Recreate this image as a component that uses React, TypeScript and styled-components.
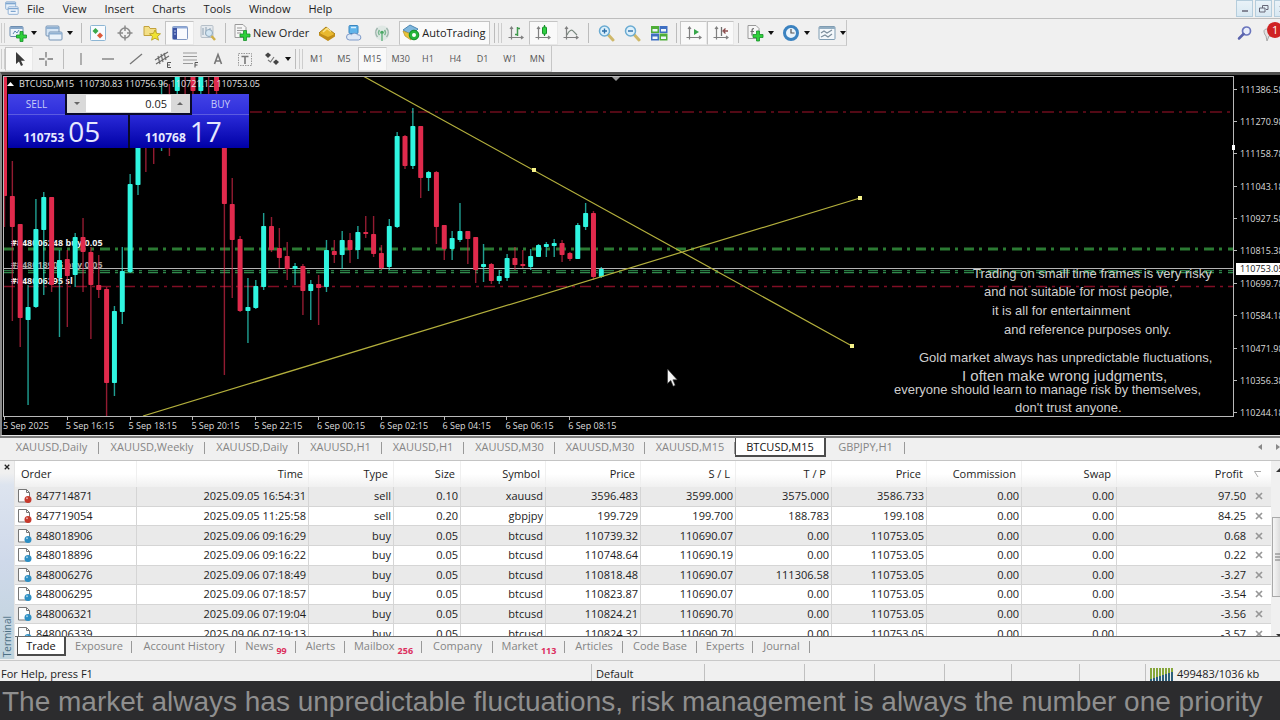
import React from 'react';
import styled, { createGlobalStyle, css } from 'styled-components';

const GlobalStyle = createGlobalStyle`
  *, *::before, *::after { box-sizing: border-box; }
  html, body { margin: 0; padding: 0; }
  body { overflow-x: hidden; background: #f0f0f0; }
  body, button, input { font-family: "Open Sans", "Noto Sans", sans-serif; font-size: 11px; }
  button { border: 0; padding: 0; margin: 0; background: none; color: inherit; }
  svg { display: block; flex: none; }
`;

/* ---------- shell ---------- */

const Window = styled.div`
  display: flex;
  flex-direction: column;
  min-height: 100vh;
  overflow: hidden;
  background: #f0f0f0;
  color: #2b2b2b;
`;

const MenuBar = styled.nav`
  display: flex;
  align-items: flex-start;
  height: 19px;
  border-bottom: 1px solid #bdbdbd;
`;

const MenuIcon = styled.span`
  width: 25px;
  padding: 1px 0 0 4px;
`;

const MenuButton = styled.button`
  height: 16px;
  padding: 0 9px;
  line-height: 15px;
  color: #222;
  white-space: nowrap;
  &:first-of-type { padding-left: 2px; }
`;

const WindowControls = styled.div`
  display: flex;
  gap: 2px;
  width: 44px;
  margin-left: auto;
  overflow: hidden;
`;

const WindowButton = styled.button`
  display: flex;
  flex: none;
  align-items: center;
  justify-content: center;
  width: 17px;
  height: 17px;
  border: 1px solid #b5cddc;
  background: linear-gradient(#e9f2f8, #d8e8f2);
`;

const Toolbar = styled.div<{ $last?: boolean }>`
  display: flex;
  align-items: center;
  height: ${(p) => (p.$last ? 26 : 27)}px;
  ${(p) => !p.$last && css`padding-top: 1px;`}
`;

const Strip = styled.div`
  display: flex;
  align-items: center;
  height: 26px;
  padding-left: 1px;
  border-right: 1px solid #c6c6c6;
  border-bottom: 1px solid #d2d2d2;
`;

const Grip = styled.span`
  flex: none;
  width: 4px;
  height: 20px;
  border: 1px solid #cdcdcd;
  border-width: 0 1px;
`;

const Sep = styled.span`
  flex: none;
  width: 8px;
  height: 20px;
  background: linear-gradient(#bcbcbc, #bcbcbc) 4px 0 / 1px 100% no-repeat;
`;

const Group = styled.div<{ $width: number }>`
  display: flex;
  flex: none;
  align-items: center;
  width: ${(p) => p.$width}px;
  height: 24px;
`;

const ToolButton = styled.button<{ $pressed?: boolean }>`
  display: flex;
  flex: 1 0 0;
  align-items: center;
  justify-content: center;
  height: 24px;
  font-size: 9px;
  color: #555;
  ${(p) =>
    p.$pressed &&
    css`
      background: #f9f9f9;
      border: 1px solid #c4c4c4;
      border-right-color: #e8e8e8;
      border-bottom-color: #e8e8e8;
    `}
`;

const DropButton = styled.button<{ $narrow?: boolean }>`
  display: flex;
  flex: none;
  align-items: center;
  gap: 4px;
  width: ${(p) => (p.$narrow ? 32 : 36)}px;
  height: 24px;
  padding-left: 4px;
`;

const LabelButton = styled.button<{ $pressed?: boolean }>`
  display: flex;
  flex: none;
  align-items: center;
  gap: 2px;
  height: 24px;
  padding: 0 4px 1px;
  color: #222;
  white-space: nowrap;
  ${(p) =>
    p.$pressed &&
    css`
      margin-left: 4px;
      padding: 0 4px 1px 2px;
      background: #fafafa;
      border: 1px solid #c4c4c4;
      border-bottom-color: #ddd;
    `}
`;

const ToolbarEnd = styled.div`
  display: flex;
  align-items: center;
  gap: 7px;
  width: 44px;
  margin-left: auto;
  overflow: hidden;
`;

/* ---------- chart ---------- */

const ChartFrame = styled.main`
  display: grid;
  flex: none;
  grid-template-columns: 1fr 46px;
  grid-template-rows: 342px 18px;
  border-top: 3px solid #50504f;
  border-bottom: 1px solid #e6e6e6;
  border-left: 2px solid #8a8a8a;
  background: #000;
  overflow: hidden;
`;

const Plot = styled.section`
  position: relative;
  margin: 1px 0 0 1px;
  border: 1px solid #b9b9b9;
  overflow: hidden;
`;

const PlotSvg = styled.svg`
  position: absolute;
  inset: 0;
  width: 100%;
  height: 100%;
`;

const PlotTitle = styled.div`
  position: absolute;
  top: 0;
  left: 3px;
  display: flex;
  align-items: center;
  gap: 5px;
  height: 13px;
  font-size: 9px;
  color: #e2e2e2;
  white-space: pre;
`;

const OrderTag = styled.span<{ $y: number; $dim?: boolean }>`
  position: absolute;
  top: ${(p) => p.$y}px;
  left: 7px;
  font-size: 9px;
  font-weight: 700;
  line-height: 12px;
  color: ${(p) => (p.$dim ? '#a8a8a8' : '#f0f0f0')};
  white-space: nowrap;
`;

const Note = styled.p<{ $y: number; $from: number; $large?: boolean }>`
  position: absolute;
  top: ${(p) => p.$y}px;
  left: calc(100% - ${(p) => p.$from}px);
  margin: 0;
  font-family: "Liberation Sans", Arial, sans-serif;
  font-size: ${(p) => (p.$large ? 15 : 13)}px;
  line-height: 18px;
  color: #cfcfcf;
  white-space: nowrap;
`;

const TradePanel = styled.div`
  position: absolute;
  top: 17px;
  left: 4px;
  display: grid;
  grid-template-columns: 57px minmax(0, 1fr) 57px;
  grid-template-rows: 21px 33px;
  width: 241px;
  background: #0a0a2a;
`;

const SideButton = styled.button`
  color: #c9cdf8;
  font-size: 10px;
  background: linear-gradient(#4242e6, #2f2fdc);
  border-bottom: 1px solid #5b5be0;
`;

const VolumeBox = styled.div`
  display: flex;
  height: 19px;
  margin: 0 2px;
  border: 1px solid #d8d8d8;
  background: #fff;
`;

const VolumeStep = styled.button`
  display: flex;
  flex: none;
  align-items: center;
  justify-content: center;
  width: 18px;
  background: #d9d9d9;
`;

const VolumeInput = styled.input`
  flex: 1;
  min-width: 0;
  border: 0;
  padding: 0 4px;
  text-align: right;
  color: #222;
  background: #fff;
`;

const Quotes = styled.div`
  display: grid;
  grid-column: 1 / -1;
  grid-template-columns: 1fr 1fr;
  gap: 2px;
  min-height: 0;
`;

const Quote = styled.div`
  display: flex;
  align-items: baseline;
  justify-content: center;
  gap: 4px;
  height: 33px;
  padding-right: 12px;
  font-size: 12px;
  font-weight: 700;
  line-height: 32px;
  color: #e6e8ff;
  background: linear-gradient(#2a2ad8, #0000a6);
  overflow: hidden;
`;

const QuoteBig = styled.span`
  font-size: 28px;
  font-weight: 400;
  line-height: 32px;
`;

const PriceAxis = styled.div`
  position: relative;
  display: grid;
  grid-auto-rows: 1fr;
  height: 356px;
  margin-top: -2px;
  font-size: 9px;
  color: #dcdcdc;
`;

const PriceLabel = styled.span`
  display: flex;
  align-items: center;
  gap: 3px;
  &::before {
    content: "";
    width: 3px;
    height: 1px;
    background: #b9b9b9;
  }
`;

const CurrentPrice = styled.span`
  position: absolute;
  top: 190px;
  left: 2px;
  width: 46px;
  padding-left: 4px;
  line-height: 12px;
  color: #111;
  background: #fff;
`;

const AxisHandle = styled.span`
  position: absolute;
  top: 72px;
  left: -2px;
  width: 3px;
  height: 5px;
  background: #fff;
`;

const TimeAxis = styled.div`
  display: grid;
  grid-template-columns: repeat(10, 1fr);
  width: 628px;
  font-size: 9px;
  color: #dcdcdc;
`;

const TimeLabel = styled.span`
  position: relative;
  padding-left: 1px;
  line-height: 17px;
  white-space: nowrap;
  &::before {
    content: "";
    position: absolute;
    top: 0;
    left: 2px;
    width: 1px;
    height: 3px;
    background: #b9b9b9;
  }
`;

/* ---------- tabs ---------- */

const ChartTabs = styled.div`
  display: flex;
  flex: none;
  height: 25px;
  padding-left: 4px;
  border-top: 2px solid #7b7b7b;
  border-bottom: 1px solid #c4c4c4;
`;

const BottomTabs = styled.div`
  display: flex;
  flex: none;
  height: 22px;
  padding-left: 2px;
  border-top: 1px solid #6b6b6b;
`;

const Tab = styled.button<{ $active?: boolean; $width: number }>`
  position: relative;
  flex: none;
  width: ${(p) => p.$width}px;
  height: 19px;
  padding: 0 0 2px;
  color: #858585;
  text-align: center;
  white-space: nowrap;
  &::after {
    content: "";
    position: absolute;
    top: 4px;
    right: 0;
    width: 1px;
    height: 12px;
    background: #999;
  }
  ${(p) =>
    p.$active &&
    css`
      padding-bottom: 0;
      color: #111;
      background: #fff;
      border: solid #4b4b4b;
      border-width: 0 2px 2px 1px;
      &::after { display: none; }
    `}
`;

const Count = styled.sub`
  margin-left: 3px;
  font-size: 9px;
  font-weight: 700;
  line-height: 0;
  color: #dc2f5e;
  vertical-align: -4px;
`;

const TabScroll = styled.div`
  display: flex;
  gap: 14px;
  width: 24px;
  padding: 6px 0 0 2px;
  margin-left: auto;
  overflow: hidden;
`;

/* ---------- terminal ---------- */

const Terminal = styled.section`
  display: grid;
  flex: none;
  grid-template-columns: 15px 1fr;
  height: 198px;
`;

const SideBar = styled.aside`
  display: flex;
  flex-direction: column;
  align-items: center;
  justify-content: space-between;
  background: linear-gradient(#f0f0f0 12px, #dde4ef 24px, #cfd9ea 100px, #bfd3dc);
  border-right: 1px solid #e4e4e4;
`;

const SideTitle = styled.span`
  writing-mode: vertical-rl;
  transform: rotate(180deg);
  padding-top: 2px;
  font-size: 10px;
  line-height: 13px;
  color: #4c7084;
`;

const CloseButton = styled.button`
  display: flex;
  align-items: center;
  justify-content: center;
  width: 12px;
  height: 12px;
`;

const TerminalBody = styled.div`
  display: flex;
  flex-direction: column;
  min-width: 0;
`;

const TableArea = styled.div`
  display: grid;
  grid-template-columns: 1fr 9px;
  height: 175px;
  overflow: hidden;
`;

const OrderTable = styled.table`
  width: 100%;
  height: 183px;
  table-layout: fixed;
  border-spacing: 0;
  background: #fff;
  color: #1c1c1c;
`;

const HeadCell = styled.th<{ $left?: boolean }>`
  height: 26px;
  padding: 0 5px 0 6px;
  border-right: 1px solid #efefef;
  font-weight: 400;
  line-height: 14px;
  text-align: ${(p) => (p.$left ? 'left' : 'right')};
  white-space: nowrap;
  background: linear-gradient(#fff 50%, #f0f0f0);
  &:nth-last-child(-n + 2) { border-right: 0; }
`;

const Row = styled.tr`
  &:nth-child(odd) { background: #eaeaea; }
`;

const Cell = styled.td<{ $left?: boolean }>`
  padding: 0 2px 0 3px;
  border-right: 1px solid #d5d5d5;
  border-bottom: 1px solid #d5d5d5;
  line-height: 14px;
  text-align: ${(p) => (p.$left ? 'left' : 'right')};
  white-space: nowrap;
  overflow: hidden;
  &:nth-last-child(-n + 2) { border-right: 0; }
`;

const OrderId = styled.span`
  display: flex;
  align-items: center;
  gap: 4px;
  height: 14px;
`;

const RowClose = styled.button`
  display: flex;
  align-items: center;
  justify-content: center;
  width: 16px;
  height: 14px;
`;

const ScrollTrack = styled.div`
  display: flex;
  flex-direction: column;
  align-items: flex-end;
  justify-content: space-between;
  overflow: hidden;
  background: #f0f0f0;
`;

const ScrollThumb = styled.div`
  display: flex;
  align-items: center;
  justify-content: flex-end;
  width: 8px;
  height: 80px;
  margin-top: 6px;
  border: 1px solid #a9a9a9;
  border-right: 0;
  background: linear-gradient(90deg, #f6f6f6, #dcdcdc);
`;

const StatusBar = styled.footer`
  display: grid;
  flex: none;
  grid-template-columns: 1fr 113px 100px 70px 70px 67px 68px 66px 135px;
  height: 21px;
  margin-top: 1px;
  padding-top: 3px;
  border-top: 1px solid #c9c9c9;
`;

const StatusCell = styled.span`
  display: flex;
  align-items: center;
  gap: 4px;
  padding: 3px 0 0 4px;
  border-left: 1px solid #c0c0c0;
  line-height: 14px;
  color: #222;
  white-space: nowrap;
  &:first-child { border-left: 0; padding-left: 1px; }
`;

const Banner = styled.div`
  flex: 1 0 38px;
  padding-left: 2px;
  font-family: "Liberation Sans", Arial, sans-serif;
  font-size: 28px;
  line-height: 42px;
  color: #8f8f8f;
  background: #2c2c2e;
  white-space: nowrap;
  overflow: hidden;
`;

/* ---------- icons ---------- */

const Icon = ({ children, size = 18 }: { children: React.ReactNode; size?: number }) => (
  <svg width={size} height={size} viewBox="0 0 18 18" fill="none" aria-hidden="true">
    {children}
  </svg>
);

const Caret = () => (
  <svg width="6" height="4" viewBox="0 0 6 4" aria-hidden="true">
    <path d="M0 0h6L3 4z" fill="#111" />
  </svg>
);

const Plus = ({ x = 12, y = 12 }: { x?: number; y?: number }) => (
  <path
    d={`M${x - 1.5} ${y - 5}h3v3.500h3.500v3h-3.500v3.500h-3v-3.500h-3.500v-3h3.500z`}
    fill="#2fd03a"
    stroke="#15902a"
    strokeWidth=".8"
  />
);

const AppIcon = () => (
  <Icon size={15}>
    <rect x="2" y="1" width="12" height="9" rx="1" fill="#e6f0fa" stroke="#7fa6cf" />
    <path d="M2 3h12" stroke="#7fa6cf" strokeWidth="2" />
    <rect x="5" y="7" width="12" height="9" rx="1" fill="#f1f6fc" stroke="#7fa6cf" />
    <path d="M5 9h12M8 12.500h6" stroke="#7fa6cf" strokeWidth="1.500" />
  </Icon>
);

const NewChartIcon = () => (
  <Icon>
    <rect x="1" y="2.500" width="13" height="10" rx="1" fill="#eef4fb" stroke="#6d8db0" />
    <path d="M1 4h13" stroke="#86a6c8" strokeWidth="2" />
    <path d="M4 10l2-3 2 2 2-3" stroke="#5d86b0" />
    <Plus x={12.500} y={12.500} />
  </Icon>
);

const ProfilesIcon = () => (
  <Icon>
    <rect x="1" y="2" width="13" height="10" rx="1" fill="#d5e5f5" stroke="#7593b5" />
    <path d="M1 4h13" stroke="#8fb0d2" strokeWidth="2" />
    <rect x="4" y="8" width="13" height="8" rx="1" fill="#eaf2fa" stroke="#7593b5" />
    <path d="M4 9.500h13" stroke="#8fb0d2" strokeWidth="2" />
  </Icon>
);

const MarketWatchIcon = () => (
  <Icon>
    <rect x="1.500" y="1.500" width="15" height="15" rx="1" fill="#f8fbfe" stroke="#8db6d4" />
    <path d="M6.500 4l3 3-3 3-3-3z" fill="#3aa84a" />
    <path d="M11 8.500l3 3-3 3-3-3z" fill="#dc5a3a" />
  </Icon>
);

const DataWindowIcon = () => (
  <Icon>
    <circle cx="9" cy="9" r="5" stroke="#8a8a8a" strokeWidth="1.500" />
    <path d="M9 1.500v5.500M9 11v5.500M1.500 9H7M11 9h5.500" stroke="#8a8a8a" strokeWidth="1.500" />
  </Icon>
);

const NavigatorIcon = () => (
  <Icon>
    <path d="M1 2.500h5l1 2h6v7H1z" fill="#f3df86" stroke="#c3a23c" />
    <path d="M12 6l1.600 3.400 3.900.4-2.900 2.600.9 3.800-3.500-2-3.400 2 .8-3.800L6.500 9.800l3.900-.4z" fill="#f0e232" stroke="#b39a1d" strokeWidth=".8" />
  </Icon>
);

const TerminalIcon = () => (
  <Icon>
    <rect x="1.500" y="2.500" width="15" height="13" rx="1" fill="#f8fafe" stroke="#7f97c2" />
    <path d="M2 3.500h14" stroke="#8fa8d6" strokeWidth="2" />
    <rect x="2" y="4" width="4" height="11" fill="#3d55a4" />
    <path d="M3 7h2M3 10h2" stroke="#b9c9ec" />
  </Icon>
);

const TesterIcon = () => (
  <Icon>
    <rect x="2" y="1.500" width="12" height="12" rx="1" fill="#e4e9ee" stroke="#b6bfc8" />
    <path d="M4 4v7M7 3v8M11 4v4" stroke="#8ea0b0" />
    <circle cx="10" cy="9" r="3.500" fill="#d3e6f3" stroke="#8fa8bc" />
    <path d="M12.500 12l3.500 4" stroke="#d1b04a" strokeWidth="2.500" />
  </Icon>
);

const NewOrderIcon = () => (
  <Icon>
    <path d="M2 1.500h8l3 3v10H2z" fill="#f6f6f6" stroke="#9a9a9a" />
    <path d="M4 5h5M4 7.500h6M4 10h4" stroke="#979797" />
    <Plus x={12} y={12.500} />
  </Icon>
);

const MetaEditorIcon = () => (
  <Icon>
    <path d="M1 9l7-6 9 7-7 6z" fill="#e8b92f" stroke="#a77c12" />
    <path d="M1 9l9 4 7-3v2.500L10 17l-9-5.500z" fill="#c28e18" />
    <path d="M5 8l4-3.500 4 3" stroke="#f9e28c" strokeWidth="1.500" />
  </Icon>
);

const CloudIcon = () => (
  <Icon>
    <rect x="4" y="1.500" width="9" height="8" rx="1" fill="#5fb4ea" stroke="#3a86c0" />
    <path d="M6 3.500h5" stroke="#d8effc" strokeWidth="1.500" />
    <path d="M4.500 16a3 3 0 010-6c1 0 1.500.4 1.900.9a3.600 3.600 0 016.200 0A2.600 2.600 0 1113.500 16z" fill="#dfe9f6" stroke="#7f9bc9" />
  </Icon>
);

const SignalIcon = () => (
  <Icon>
    <circle cx="9" cy="9" r="7.500" fill="#dfe8e4" />
    <path d="M4.500 4a7 7 0 000 9M13.500 4a7 7 0 010 9" stroke="#9db3ab" strokeWidth="1.500" />
    <path d="M6.500 6a4 4 0 000 5M11.500 6a4 4 0 010 5" stroke="#7cb892" strokeWidth="1.500" />
    <circle cx="9" cy="8.500" r="1.800" fill="#4aa864" />
    <path d="M9 9v8" stroke="#6ab585" strokeWidth="1.500" />
  </Icon>
);

const AutoTradingIcon = () => (
  <Icon>
    <path d="M1 7l7-5 8 4-6 6z" fill="#7fb7dd" stroke="#4d88b3" />
    <path d="M1 8l8 3v6L3 13z" fill="#e9c43a" stroke="#b4912a" strokeWidth=".7" />
    <circle cx="12" cy="12" r="4.800" fill="#27b53a" stroke="#138a25" />
    <circle cx="12" cy="12" r="2" fill="#fff" />
  </Icon>
);

const AxisGlyph = () => (
  <path d="M4.500 3v12.500M1.500 13.500h14.500M3 5l1.500-2L6 5M14 12l2 1.500-2 1.500" stroke="#808080" strokeWidth="1.200" />
);

const BarChartIcon = () => (
  <Icon>
    <AxisGlyph />
    <path d="M10.500 3v9M8 10.500h2.500M10.500 4.500H13" stroke="#3f9a4c" strokeWidth="1.500" />
  </Icon>
);

const CandleChartIcon = () => (
  <Icon>
    <AxisGlyph />
    <path d="M10.500 1v11" stroke="#1a8f2c" strokeWidth="1.200" />
    <rect x="8.500" y="3" width="4" height="7" rx="1" fill="#2fd042" stroke="#1a8f2c" />
  </Icon>
);

const LineChartIcon = () => (
  <Icon>
    <AxisGlyph />
    <path d="M5 11c2-5 5-6 6.500-3.500L15 11" stroke="#7b8a80" strokeWidth="1.200" />
  </Icon>
);

const ZoomIcon = ({ plus }: { plus?: boolean }) => (
  <Icon>
    <path d="M11 10.500l5 5.500" stroke="#cfb86a" strokeWidth="3" strokeLinecap="round" />
    <circle cx="7.500" cy="7" r="5" fill="#ddf0fb" stroke="#6aabd2" strokeWidth="1.500" />
    <path d={plus ? 'M5 7h5M7.500 4.500v5' : 'M5 7h5'} stroke="#2a6ea8" strokeWidth="1.400" />
  </Icon>
);

const TileIcon = () => (
  <Icon>
    <rect x="1" y="2" width="8" height="7" fill="#4fae38" />
    <rect x="9.500" y="2" width="8" height="7" fill="#3f6fc2" />
    <rect x="1" y="9.500" width="8" height="7" fill="#3f6fc2" />
    <rect x="9.500" y="9.500" width="8" height="7" fill="#4fae38" />
    <path d="M2.500 5h5v2.500h-5zM11 5h5v2.500h-5zM2.500 12.500h5V15h-5zM11 12.500h5V15h-5z" fill="#eef6fb" />
  </Icon>
);

const AutoScrollIcon = () => (
  <Icon>
    <AxisGlyph />
    <path d="M9 5l5 3-5 3z" fill="#37a64a" />
  </Icon>
);

const ShiftIcon = () => (
  <Icon>
    <AxisGlyph />
    <path d="M9.500 3v9" stroke="#707070" strokeWidth="1.300" />
    <path d="M16 7h-4M13.500 4.500L11 7l2.500 2.500" stroke="#8b4a4a" strokeWidth="1.300" />
  </Icon>
);

const IndicatorsIcon = () => (
  <Icon>
    <path d="M2 1.500h8l3 3v10H2z" fill="#f6f6f6" stroke="#9a9a9a" />
    <path d="M8 4.500c-2 0-2 1-2 3v4M4.500 7.500H8" stroke="#707070" strokeWidth="1.200" />
    <Plus x={12} y={12} />
  </Icon>
);

const ClockIcon = () => (
  <Icon>
    <circle cx="9" cy="9" r="6.500" fill="#e8f3fc" stroke="#3b82c0" strokeWidth="3" />
    <path d="M9 5v4h3.500" stroke="#555" strokeWidth="1.200" />
  </Icon>
);

const TemplateIcon = () => (
  <Icon>
    <rect x="1" y="2.500" width="16" height="13" rx="1" fill="#f4f8fb" stroke="#7f9cb2" />
    <path d="M1 4h16" stroke="#93aec2" strokeWidth="2" />
    <path d="M3 9l3-2 3 2 5-3M3 13l4-2 3 2 4-3" stroke="#7c8e9c" strokeWidth="1.200" />
  </Icon>
);

const PointerIcon = () => (
  <Icon>
    <path d="M6 2v12l3-2.500 2 4.500 2-1-2-4.200h4z" fill="#3b3b3b" />
  </Icon>
);

const CrosshairIcon = () => (
  <Icon>
    <path d="M9 2v5.500M9 10.500V16M2 9h5.500M10.500 9H16" stroke="#777" strokeWidth="1.300" />
  </Icon>
);

const VLineIcon = () => <Icon><path d="M9 3v12" stroke="#8b8b8b" strokeWidth="1.300" /></Icon>;
const HLineIcon = () => <Icon><path d="M3 9h12" stroke="#777" strokeWidth="1.300" /></Icon>;
const TrendIcon = () => <Icon><path d="M3 14L15 4" stroke="#777" strokeWidth="1.300" /></Icon>;

const ChannelIcon = () => (
  <Icon>
    <path d="M1 10L14 2M2 14l13-8M4 6l2 8M7 4l2 8M10 3l2 7" stroke="#6b6b6b" strokeWidth="1.200" />
    <path d="M17 12.500h-3.500v5H17M13.500 15H16" stroke="#555" />
  </Icon>
);

const FiboIcon = () => (
  <Icon>
    <path d="M2 3h14M2 6.500h14M2 10h14M2 13.500h10" stroke="#999" strokeWidth="1.200" />
    <path d="M17 12.500h-3v5M14 15h2.500" stroke="#555" />
  </Icon>
);

const LetterIcon = () => (
  <Icon><path d="M5.500 14L9 4.500l3.500 9.500M6.800 11h4.400" stroke="#777" strokeWidth="1.600" /></Icon>
);

const TextLabelIcon = () => (
  <Icon>
    <rect x="2.500" y="3.500" width="13" height="12" stroke="#999" strokeDasharray="1.500 1" />
    <path d="M5.500 6.500h7M9 6.500V14" stroke="#777" strokeWidth="1.600" />
  </Icon>
);

const ArrowsIcon = () => (
  <Icon>
    <path d="M2 5l3-2.500L8 5 5 8z" fill="#444" />
    <path d="M10 12l3-2.500 3 2.500-3 3z" fill="#444" />
    <path d="M5 10l2.500 2L11 7" stroke="#777" strokeWidth="1.200" />
  </Icon>
);

const SearchIcon = () => (
  <Icon>
    <circle cx="10.500" cy="7" r="4" fill="#e9eefb" stroke="#6a75bd" strokeWidth="1.700" />
    <path d="M7.500 10L3 14.500" stroke="#5a63ad" strokeWidth="2.500" strokeLinecap="round" />
  </Icon>
);

const AlertIcon = () => (
  <svg width="24" height="22" viewBox="0 0 24 22" aria-hidden="true">
    <path d="M3 9c0-3 9-3 9 1s-3 4-4 4l-2 5-1-5c-1-1-2-3-2-5z" fill="#e2e2e2" stroke="#a8a8a8" />
    <circle cx="14" cy="8" r="8" fill="#cf2323" />
    <text x="11" y="12" fontSize="11" fill="#fff">1</text>
  </svg>
);

const DocIcon = ({ color }: { color: string }) => (
  <svg width="14" height="14" viewBox="0 0 14 14" fill="none" aria-hidden="true">
    <path d="M.500.500h8l3 3v9.500h-11z" fill="#fdfdfd" stroke="#767676" />
    <path d="M8.500.500v3h3" stroke="#767676" />
    <circle cx="10" cy="10.500" r="3.500" fill={color} />
    <circle cx="9" cy="9.300" r="1" fill="#fff" opacity=".55" />
  </svg>
);

const CrossIcon = ({ color, size = 8 }: { color: string; size?: number }) => (
  <svg width={size} height={size} viewBox="0 0 8 8" aria-hidden="true">
    <path d="M1 1l6 6M7 1L1 7" stroke={color} strokeWidth="1.700" />
  </svg>
);

const TrafficIcon = () => (
  <svg width="23" height="13" viewBox="0 0 23 13" aria-hidden="true">
    {Array.from({ length: 8 }, (_, i) => (
      <g key={i}>
        <rect x={i * 3} y="0" width="2" height={11 - i} fill="#86a63a" />
        <rect x={i * 3} y={11 - i} width="2" height={2 + i} fill="#2c5f7c" />
      </g>
    ))}
  </svg>
);

/* ---------- data ---------- */

type Dir = 'u' | 'd';
// direction, high, body top, body bottom, low
const CANDLES: [Dir, number, number, number, number][] = [
  ['d', 77, 77, 196, 227], ['d', 161, 196, 227, 321], ['d', 224, 224, 318, 347], ['u', 285, 307, 320, 405],
  ['u', 199, 229, 307, 308], ['u', 192, 197, 230, 295], ['d', 197, 197, 285, 292], ['u', 250, 260, 278, 337],
  ['d', 250, 259, 276, 327], ['u', 233, 237, 275, 287], ['d', 218, 237, 252, 292], ['d', 247, 252, 285, 339],
  ['d', 255, 285, 290, 298], ['d', 287, 289, 383, 416], ['u', 306, 311, 383, 396], ['u', 247, 271, 312, 324],
  ['u', 174, 184, 272, 273], ['u', 110, 118, 185, 195], ['d', 104, 108, 130, 172], ['d', 100, 110, 135, 164],
  ['u', 80, 100, 130, 151], ['d', 84, 100, 120, 156], ['u', 70, 70, 91, 100], ['d', 76, 95, 120, 130],
  ['d', 70, 70, 91, 100], ['u', 70, 70, 91, 100], ['d', 76, 95, 120, 130], ['d', 70, 70, 91, 130],
  ['d', 100, 110, 204, 375], ['d', 178, 204, 240, 298], ['d', 236, 239, 311, 312], ['u', 278, 307, 311, 343],
  ['u', 280, 286, 308, 309], ['u', 213, 226, 287, 290], ['d', 217, 226, 250, 252], ['d', 228, 248, 258, 268],
  ['d', 242, 256, 269, 280], ['u', 263, 266, 269, 285], ['d', 264, 266, 291, 315], ['u', 280, 284, 291, 320],
  ['d', 275, 284, 288, 325], ['u', 240, 250, 287, 292], ['d', 240, 251, 255, 263], ['u', 231, 240, 255, 269],
  ['d', 233, 240, 250, 263], ['u', 226, 232, 250, 259], ['d', 216, 232, 234, 238], ['d', 216, 234, 254, 257],
  ['d', 245, 253, 268, 270], ['u', 219, 226, 267, 270], ['u', 132, 136, 227, 228], ['d', 135, 136, 166, 169],
  ['u', 108, 126, 166, 169], ['d', 126, 126, 178, 198], ['u', 171, 172, 178, 191], ['d', 171, 172, 227, 244],
  ['d', 225, 225, 249, 260], ['u', 231, 238, 249, 260], ['u', 203, 231, 240, 242], ['d', 231, 231, 239, 264],
  ['d', 237, 237, 270, 283], ['u', 244, 264, 267, 282], ['d', 263, 264, 281, 284], ['u', 270, 276, 281, 284],
  ['u', 254, 258, 278, 281], ['d', 247, 258, 265, 270], ['d', 250, 264, 266, 268], ['u', 249, 256, 267, 270],
  ['u', 244, 245, 257, 257], ['u', 242, 244, 247, 257], ['u', 239, 243, 246, 257], ['d', 240, 243, 255, 262],
  ['d', 252, 253, 259, 261], ['u', 223, 225, 259, 259], ['u', 203, 213, 227, 230], ['d', 211, 213, 277, 280],
  ['u', 267, 269, 277, 278],
];

const PRICES = ['111386.58', '111270.98', '111158.78', '111043.18', '110927.58', '110815.38', '110699.78', '110584.18', '110471.98', '110356.38', '110244.18'];
const TIMES = ['5 Sep 2025', '5 Sep 16:15', '5 Sep 18:15', '5 Sep 20:15', '5 Sep 22:15', '6 Sep 00:15', '6 Sep 02:15', '6 Sep 04:15', '6 Sep 06:15', '6 Sep 08:15'];

const NOTES: { text: string; y: number; from: number; large?: boolean }[] = [
  { text: 'Trading on small time frames is very risky', y: 188, from: 260 },
  { text: 'and not suitable for most people,', y: 206, from: 249 },
  { text: 'it is all for entertainment', y: 225, from: 241 },
  { text: 'and reference purposes only.', y: 244, from: 229 },
  { text: 'Gold market always has unpredictable fluctuations,', y: 272, from: 314 },
  { text: 'I often make wrong judgments,', y: 290, from: 271, large: true },
  { text: 'everyone should learn to manage risk by themselves,', y: 304, from: 339 },
  { text: "don't trust anyone.", y: 322, from: 218 },
];

const CHART_TABS: [string, number][] = [
  ['XAUUSD,Daily', 95], ['XAUUSD,Weekly', 106], ['XAUUSD,Daily', 94], ['XAUUSD,H1', 83], ['XAUUSD,H1', 82],
  ['XAUUSD,M30', 91], ['XAUUSD,M30', 90], ['XAUUSD,M15', 90], ['BTCUSD,M15', 91], ['GBPJPY,H1', 79],
];

const BOTTOM_TABS: [string, number, string?][] = [
  ['Trade', 49], ['Exposure', 66], ['Account History', 104], ['News', 60, '99'], ['Alerts', 49], ['Mailbox', 77, '256'],
  ['Company', 71], ['Market', 72, '113'], ['Articles', 58], ['Code Base', 74], ['Experts', 56], ['Journal', 57],
];

const COLUMNS: [string, number | undefined][] = [
  ['Order', 122], ['Time', 172], ['Type', 85], ['Size', 67], ['Symbol', 85], ['Price', 95], ['S / L', 95],
  ['T / P', 96], ['Price', 95], ['Commission', 95], ['Swap', 95], ['Profit', undefined],
];

const ORDERS: string[][] = [
  ['847714871', '2025.09.05 16:54:31', 'sell', '0.10', 'xauusd', '3596.483', '3599.000', '3575.000', '3586.733', '0.00', '0.00', '97.50'],
  ['847719054', '2025.09.05 11:25:58', 'sell', '0.20', 'gbpjpy', '199.729', '199.700', '188.783', '199.108', '0.00', '0.00', '84.25'],
  ['848018906', '2025.09.06 09:16:29', 'buy', '0.05', 'btcusd', '110739.32', '110690.07', '0.00', '110753.05', '0.00', '0.00', '0.68'],
  ['848018896', '2025.09.06 09:16:22', 'buy', '0.05', 'btcusd', '110748.64', '110690.19', '0.00', '110753.05', '0.00', '0.00', '0.22'],
  ['848006276', '2025.09.06 07:18:49', 'buy', '0.05', 'btcusd', '110818.48', '110690.07', '111306.58', '110753.05', '0.00', '0.00', '-3.27'],
  ['848006295', '2025.09.06 07:18:57', 'buy', '0.05', 'btcusd', '110823.87', '110690.07', '0.00', '110753.05', '0.00', '0.00', '-3.54'],
  ['848006321', '2025.09.06 07:19:04', 'buy', '0.05', 'btcusd', '110824.21', '110690.70', '0.00', '110753.05', '0.00', '0.00', '-3.56'],
  ['848006339', '2025.09.06 07:19:13', 'buy', '0.05', 'btcusd', '110824.32', '110690.70', '0.00', '110753.05', '0.00', '0.00', '-3.57'],
];

const UP = '#2ff5e0';
const DOWN = '#e02a4c';
const CANDLE_STEP = 7.853;

/* ---------- sections ---------- */

const Levels = () => (
  <PlotSvg aria-hidden="true">
    <g transform="translate(-4 -77)" fill="none">
      <line x1="250" x2="101%" y1="112" y2="112" stroke="#6e0c1c" strokeWidth="1.500" strokeDasharray="12 5 3 4" />
      <line x1="4" x2="101%" y1="249" y2="249" stroke="#2b7a33" strokeWidth="3" strokeDasharray="10 5 3 6" />
      <line x1="4" x2="101%" y1="270.500" y2="270.500" stroke="#2a7a44" strokeDasharray="10 5 3 6" />
      <line x1="4" x2="101%" y1="272.500" y2="272.500" stroke="#2f8a4c" strokeWidth="1.500" strokeDasharray="10 5 3 6" />
      <line x1="4" x2="101%" y1="286.500" y2="286.500" stroke="#800e24" strokeWidth="1.300" strokeDasharray="11 5 3 5" />
      <line x1="4" x2="101%" y1="268.500" y2="268.500" stroke="#b4b4b4" />
    </g>
  </PlotSvg>
);

const Candles = () => (
  <PlotSvg role="img" aria-label="BTCUSD M15 price candles">
    <g transform="translate(-4 -77)">
      {CANDLES.map(([dir, high, top, bottom, low], i) => {
        const x = 4.500 + i * CANDLE_STEP;
        const color = dir === 'u' ? UP : DOWN;
        return (
          <g key={i}>
            <rect x={x - 0.700} y={high} width="1.400" height={low - high} fill={color} opacity=".65" />
            <rect x={x - 2.500} y={top} width="5" height={Math.max(bottom - top, 2)} rx=".8" fill={color} />
          </g>
        );
      })}
      <path d="M363 76L852 346M143 416L860 198" stroke="#b3af3c" strokeWidth="1.200" fill="none" />
      <path d="M532 168h4v4h-4zM850 344h4v4h-4zM858 196h4v4h-4z" fill="#f6f28a" />
      <path d="M611 76h10l-5 5z" fill="#9b9b9b" />
      <path d="M667.500 369v14.500l3.300-3 2.400 5.700 2-.9-2.300-5.500h4.300z" fill="#f4f4f4" stroke="#333" strokeWidth=".6" />
    </g>
  </PlotSvg>
);

const OneClick = () => (
  <TradePanel>
    <SideButton type="button">SELL</SideButton>
    <VolumeBox>
      <VolumeStep type="button" aria-label="Decrease volume">
        <svg width="6" height="3" aria-hidden="true"><path d="M0 0h6L3 3z" fill="#666" /></svg>
      </VolumeStep>
      <VolumeInput aria-label="Volume" defaultValue="0.05" />
      <VolumeStep type="button" aria-label="Increase volume">
        <svg width="6" height="3" aria-hidden="true"><path d="M0 3h6L3 0z" fill="#666" /></svg>
      </VolumeStep>
    </VolumeBox>
    <SideButton type="button">BUY</SideButton>
    <Quotes>
      <Quote>110753<QuoteBig>05</QuoteBig></Quote>
      <Quote>110768<QuoteBig>17</QuoteBig></Quote>
    </Quotes>
  </TradePanel>
);

const Chart = () => (
  <ChartFrame>
    <Plot>
      <Levels />
      <OrderTag $y={160}>#848006248 buy 0.05</OrderTag>
      <OrderTag $y={182} $dim>#848018906 buy 0.05</OrderTag>
      <OrderTag $y={198}>#848006295 sl</OrderTag>
      <Candles />
      <PlotTitle>
        <svg width="7" height="4" aria-hidden="true"><path d="M0 4h7L3.500 0z" fill="#fff" /></svg>
        <span>BTCUSD,M15  110730.83 110756.96 110721.12 110753.05</span>
      </PlotTitle>
      <OneClick />
      {NOTES.map((n) => (
        <Note key={n.text} $y={n.y} $from={n.from} $large={n.large}>{n.text}</Note>
      ))}
    </Plot>
    <PriceAxis>
      {PRICES.map((p) => <PriceLabel key={p}>{p}</PriceLabel>)}
      <CurrentPrice>110753.05</CurrentPrice>
      <AxisHandle />
    </PriceAxis>
    <TimeAxis>
      {TIMES.map((t) => <TimeLabel key={t}>{t}</TimeLabel>)}
    </TimeAxis>
  </ChartFrame>
);

const MainToolbar = () => (
  <Toolbar>
    <Strip>
      <Grip />
      <DropButton aria-label="New chart"><NewChartIcon /><Caret /></DropButton>
      <DropButton aria-label="Profiles"><ProfilesIcon /><Caret /></DropButton>
      <Sep />
      <Group $width={136}>
        <ToolButton aria-label="Market watch"><MarketWatchIcon /></ToolButton>
        <ToolButton aria-label="Data window"><DataWindowIcon /></ToolButton>
        <ToolButton aria-label="Navigator"><NavigatorIcon /></ToolButton>
        <ToolButton aria-label="Terminal" $pressed><TerminalIcon /></ToolButton>
        <ToolButton aria-label="Strategy tester"><TesterIcon /></ToolButton>
      </Group>
      <Sep />
      <LabelButton><NewOrderIcon />New Order</LabelButton>
      <Group $width={82}>
        <ToolButton aria-label="MetaEditor"><MetaEditorIcon /></ToolButton>
        <ToolButton aria-label="Virtual hosting"><CloudIcon /></ToolButton>
        <ToolButton aria-label="Signals"><SignalIcon /></ToolButton>
      </Group>
      <LabelButton $pressed><AutoTradingIcon />AutoTrading</LabelButton>
      <Sep />
      <Grip />
      <Group $width={82}>
        <ToolButton aria-label="Bar chart"><BarChartIcon /></ToolButton>
        <ToolButton aria-label="Candlesticks" $pressed><CandleChartIcon /></ToolButton>
        <ToolButton aria-label="Line chart"><LineChartIcon /></ToolButton>
      </Group>
      <Sep />
      <Group $width={80}>
        <ToolButton aria-label="Zoom in"><ZoomIcon plus /></ToolButton>
        <ToolButton aria-label="Zoom out"><ZoomIcon /></ToolButton>
        <ToolButton aria-label="Tile windows"><TileIcon /></ToolButton>
      </Group>
      <Sep />
      <Group $width={54}>
        <ToolButton aria-label="Auto scroll" $pressed><AutoScrollIcon /></ToolButton>
        <ToolButton aria-label="Chart shift" $pressed><ShiftIcon /></ToolButton>
      </Group>
      <Sep />
      <DropButton aria-label="Indicators"><IndicatorsIcon /><Caret /></DropButton>
      <DropButton aria-label="Periods"><ClockIcon /><Caret /></DropButton>
      <DropButton aria-label="Templates" $narrow><TemplateIcon /><Caret /></DropButton>
    </Strip>
    <ToolbarEnd>
      <button aria-label="Search"><SearchIcon /></button>
      <button aria-label="Notifications"><AlertIcon /></button>
    </ToolbarEnd>
  </Toolbar>
);

const DrawingToolbar = () => (
  <Toolbar $last>
    <Strip>
      <Grip />
      <Group $width={54}>
        <ToolButton aria-label="Cursor" $pressed><PointerIcon /></ToolButton>
        <ToolButton aria-label="Crosshair"><CrosshairIcon /></ToolButton>
      </Group>
      <Sep />
      <Group $width={192}>
        <ToolButton aria-label="Vertical line"><VLineIcon /></ToolButton>
        <ToolButton aria-label="Horizontal line"><HLineIcon /></ToolButton>
        <ToolButton aria-label="Trendline"><TrendIcon /></ToolButton>
        <ToolButton aria-label="Equidistant channel"><ChannelIcon /></ToolButton>
        <ToolButton aria-label="Fibonacci retracement"><FiboIcon /></ToolButton>
        <ToolButton aria-label="Text"><LetterIcon /></ToolButton>
        <ToolButton aria-label="Text label"><TextLabelIcon /></ToolButton>
      </Group>
      <DropButton aria-label="Arrows" $narrow><ArrowsIcon /><Caret /></DropButton>
      <Sep />
      <Grip />
      <Group $width={248}>
        {['M1', 'M5', 'M15', 'M30', 'H1', 'H4', 'D1', 'W1', 'MN'].map((t) => (
          <ToolButton key={t} $pressed={t === 'M15'}>{t}</ToolButton>
        ))}
      </Group>
    </Strip>
  </Toolbar>
);

const OrdersTable = () => (
  <OrderTable>
    <colgroup>
      {COLUMNS.map(([, w], i) => <col key={i} width={w} />)}
      <col width="23" />
    </colgroup>
    <thead>
      <tr>
        {COLUMNS.map(([name], i) => (
          <HeadCell key={i} scope="col" $left={i === 0}>{name}</HeadCell>
        ))}
        <HeadCell scope="col" aria-label="Close" $left>
          <svg width="8" height="7" fill="none" aria-hidden="true"><path d="M7 .500H.500L4 6" stroke="#aaa" /></svg>
        </HeadCell>
      </tr>
    </thead>
    <tbody>
      {ORDERS.map(([id, ...rest]) => (
        <Row key={id}>
          <Cell $left>
            <OrderId><DocIcon color={rest[1] === 'sell' ? '#c8392c' : '#2c8fc4'} />{id}</OrderId>
          </Cell>
          {rest.map((v, i) => <Cell key={i}>{v}</Cell>)}
          <Cell $left><RowClose aria-label={`Close ${id}`}><CrossIcon color="#979797" /></RowClose></Cell>
        </Row>
      ))}
    </tbody>
  </OrderTable>
);

export default function App() {
  return (
    <Window>
      <GlobalStyle />
      <MenuBar>
        <MenuIcon><AppIcon /></MenuIcon>
        {['File', 'View', 'Insert', 'Charts', 'Tools', 'Window', 'Help'].map((m) => (
          <MenuButton key={m}>{m}</MenuButton>
        ))}
        <WindowControls>
          <WindowButton aria-label="Minimize">
            <svg width="8" height="8" aria-hidden="true"><path d="M1 6h6" stroke="#667" strokeWidth="1.500" /></svg>
          </WindowButton>
          <WindowButton aria-label="Restore">
            <svg width="10" height="8" fill="none" aria-hidden="true"><path d="M3.500 3V.500H9v4H7M.500 3H6v4H.500z" stroke="#667" /></svg>
          </WindowButton>
          <WindowButton aria-label="Close window"><CrossIcon color="#667" /></WindowButton>
        </WindowControls>
      </MenuBar>
      <MainToolbar />
      <DrawingToolbar />
      <Chart />
      <ChartTabs>
        {CHART_TABS.map(([name, width], i) => (
          <Tab key={i} $width={width} $active={name === 'BTCUSD,M15'}>{name}</Tab>
        ))}
        <TabScroll>
          <svg width="4" height="6" aria-hidden="true"><path d="M4 0v6L0 3z" fill="#888" /></svg>
          <svg width="4" height="6" aria-hidden="true"><path d="M0 0v6l4-3z" fill="#888" /></svg>
        </TabScroll>
      </ChartTabs>
      <Terminal>
        <SideBar>
          <CloseButton aria-label="Close terminal"><CrossIcon color="#222" size={6} /></CloseButton>
          <SideTitle>Terminal</SideTitle>
        </SideBar>
        <TerminalBody>
          <TableArea>
            <OrdersTable />
            <ScrollTrack>
              <svg width="4" height="16" aria-hidden="true"><path d="M0 11l4-4v4z" fill="#333" /></svg>
              <ScrollThumb>
                <svg width="5" height="8" aria-hidden="true"><path d="M0 1h5M0 4h5M0 7h5" stroke="#777" /></svg>
              </ScrollThumb>
              <svg width="4" height="14" aria-hidden="true"><path d="M0 4h4v4z" fill="#333" /></svg>
            </ScrollTrack>
          </TableArea>
          <BottomTabs>
            {BOTTOM_TABS.map(([name, width, count]) => (
              <Tab key={name} $width={width} $active={name === 'Trade'}>
                {name}
                {count && <Count>{count}</Count>}
              </Tab>
            ))}
          </BottomTabs>
        </TerminalBody>
      </Terminal>
      <StatusBar>
        <StatusCell>For Help, press F1</StatusCell>
        <StatusCell>Default</StatusCell>
        <StatusCell />
        <StatusCell />
        <StatusCell />
        <StatusCell />
        <StatusCell />
        <StatusCell />
        <StatusCell><TrafficIcon />499483/1036 kb</StatusCell>
      </StatusBar>
      <Banner>The market always has unpredictable fluctuations, risk management is always the number one priority</Banner>
    </Window>
  );
}
